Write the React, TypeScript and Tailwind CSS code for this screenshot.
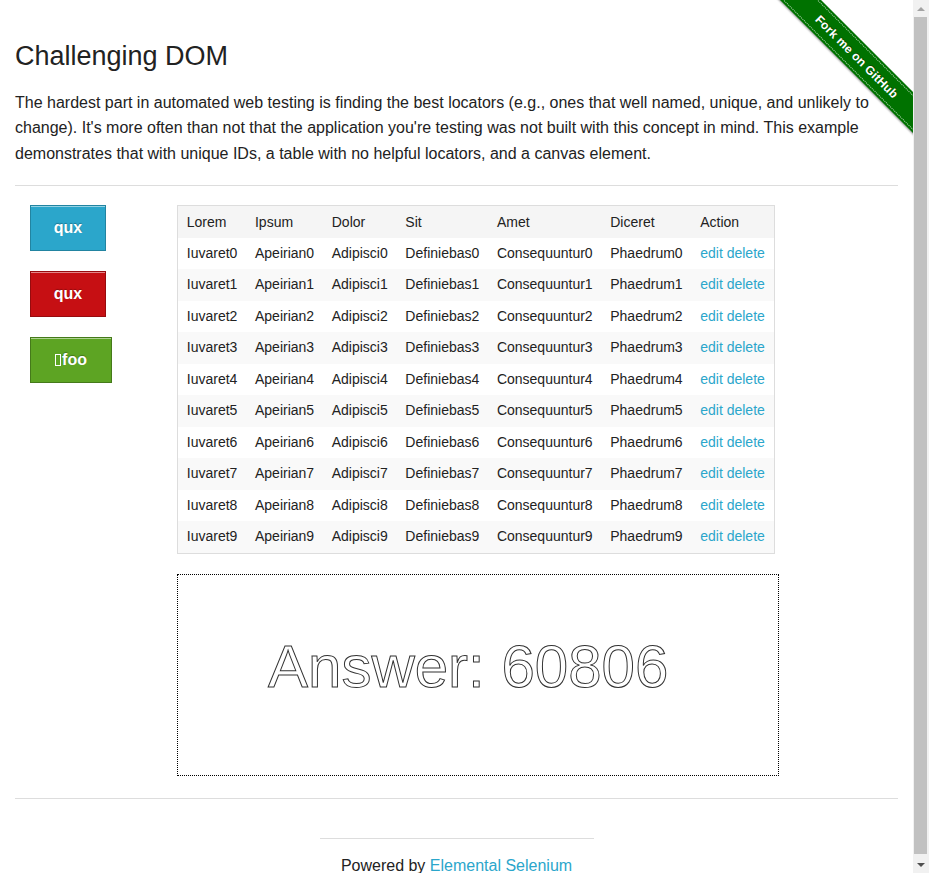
const columns = ["Lorem", "Ipsum", "Dolor", "Sit", "Amet", "Diceret", "Action"];

const rows = Array.from({ length: 10 }, (_, i) => [
  `Iuvaret${i}`,
  `Apeirian${i}`,
  `Adipisci${i}`,
  `Definiebas${i}`,
  `Consequuntur${i}`,
  `Phaedrum${i}`,
]);

function Ribbon() {
  return (
    <div className="absolute top-0 right-0 w-[149px] h-[149px] overflow-hidden pointer-events-none">
      <div className="absolute left-[-17px] top-[42px] w-[220px] h-[29px] rotate-45 bg-[#007200] shadow-[0_1px_2px_rgba(0,0,0,0.4)] flex items-center justify-center">
        <div className="absolute inset-x-0 top-[2px] bottom-[2px] border-y border-dotted border-white/70" />
        <span className="relative text-white text-[12px] font-bold tracking-[0.2px] [text-shadow:0_-1px_0_rgba(0,0,0,0.4)]">
          Fork me on GitHub
        </span>
      </div>
    </div>
  );
}

// the browser's scrollbar, drawn since the page is a bit taller than the window
function Scrollbar() {
  return (
    <div className="w-[16px] shrink-0 bg-[#f1f1f1] flex flex-col">
      <div className="h-[17px] flex items-center justify-center">
        <div className="w-0 h-0 border-x-[4px] border-x-transparent border-b-[4px] border-b-[#a3a3a3]" />
      </div>
      <div className="flex-1 mb-[2px] ml-[1px] mr-[2px] bg-[#c1c1c1]" />
      <div className="h-[17px] flex items-center justify-center">
        <div className="w-0 h-0 border-x-[4px] border-x-transparent border-t-[4px] border-t-[#505050]" />
      </div>
    </div>
  );
}

export default function App() {
  return (
    <div className="flex h-screen overflow-hidden bg-white text-[#222] font-['Liberation_Sans',Arial,sans-serif]">
      <div className="relative flex-1 min-w-0">
        <Ribbon />
        <div className="px-[15px]">
          <h3 className="pt-[42px] text-[27px] leading-[1.1]">Challenging DOM</h3>
          <p className="mt-[18px] text-[16px] leading-[1.6]">
            The hardest part in automated web testing is finding the best locators (e.g., ones that well named, unique,
            and unlikely to change). It's more often than not that the application you're testing was not built with
            this concept in mind. This example demonstrates that with unique IDs, a table with no helpful locators, and
            a canvas element.
          </p>
          <hr className="mt-[18.5px] border-[#ddd]" />

          <div className="flex pt-[19px]">
            <div className="w-[147px] shrink-0 pl-[15px] flex flex-col items-start gap-[20px]">
              <a className="w-[76px] h-[46px] flex items-center justify-center border border-[#2284a1] bg-[#2ba6cb] text-white text-[16px] font-bold shadow-[inset_0_1px_0_rgba(255,255,255,0.5)] [text-shadow:0_-1px_1px_rgba(0,0,0,0.28)]">
                qux
              </a>
              <a className="w-[76px] h-[46px] flex items-center justify-center border border-[#970b0e] bg-[#c60f13] text-white text-[16px] font-bold shadow-[inset_0_1px_0_rgba(255,255,255,0.5)] [text-shadow:0_-1px_1px_rgba(0,0,0,0.28)]">
                qux
              </a>
              <a className="w-[82px] h-[46px] flex items-center justify-center border border-[#457a1a] bg-[#5da423] text-white text-[16px] font-bold shadow-[inset_0_1px_0_rgba(255,255,255,0.5)] [text-shadow:0_-1px_1px_rgba(0,0,0,0.28)]">
                <span className="inline-block w-[6px] h-[12px] border-[1.5px] border-white mr-[1px]" />
                foo
              </a>
            </div>

            <div className="pl-[15px] flex flex-col items-start">
              <table className="border border-[#ddd] text-[14px]">
                <thead className="bg-[#f5f5f5]">
                  <tr>
                    {columns.map((c) => (
                      <th key={c} className="px-[8.8px] py-[7px] leading-[18px] text-left font-normal">
                        {c}
                      </th>
                    ))}
                  </tr>
                </thead>
                <tbody>
                  {rows.map((r, i) => (
                    <tr key={i} className="even:bg-[#f9f9f9]">
                      {r.map((cell) => (
                        <td key={cell} className="px-[8.8px] py-[7px] leading-[17.5px]">
                          {cell}
                        </td>
                      ))}
                      <td className="px-[8.8px] py-[7px] leading-[17.5px] text-[#2ba6cb]">
                        <a>edit</a> <a>delete</a>
                      </td>
                    </tr>
                  ))}
                </tbody>
              </table>

              <div className="mt-[20px] w-[602px] h-[202px] border border-dotted border-black pl-[90px] pt-[62px]">
                <div className="text-[60px] leading-none text-transparent [-webkit-text-stroke:1px_#333]">
                  Answer: 60806
                </div>
              </div>
            </div>
          </div>

          <hr className="mt-[22px] border-[#ddd]" />
        </div>

        <div className="w-[274px] mx-auto mt-[39px]">
          <hr className="border-[#ddd]" />
          <div className="mt-[14px] text-center text-[16px] leading-[1.6]">
            Powered by <a className="text-[#2ba6cb]">Elemental Selenium</a>
          </div>
        </div>
      </div>
      <Scrollbar />
    </div>
  );
}
